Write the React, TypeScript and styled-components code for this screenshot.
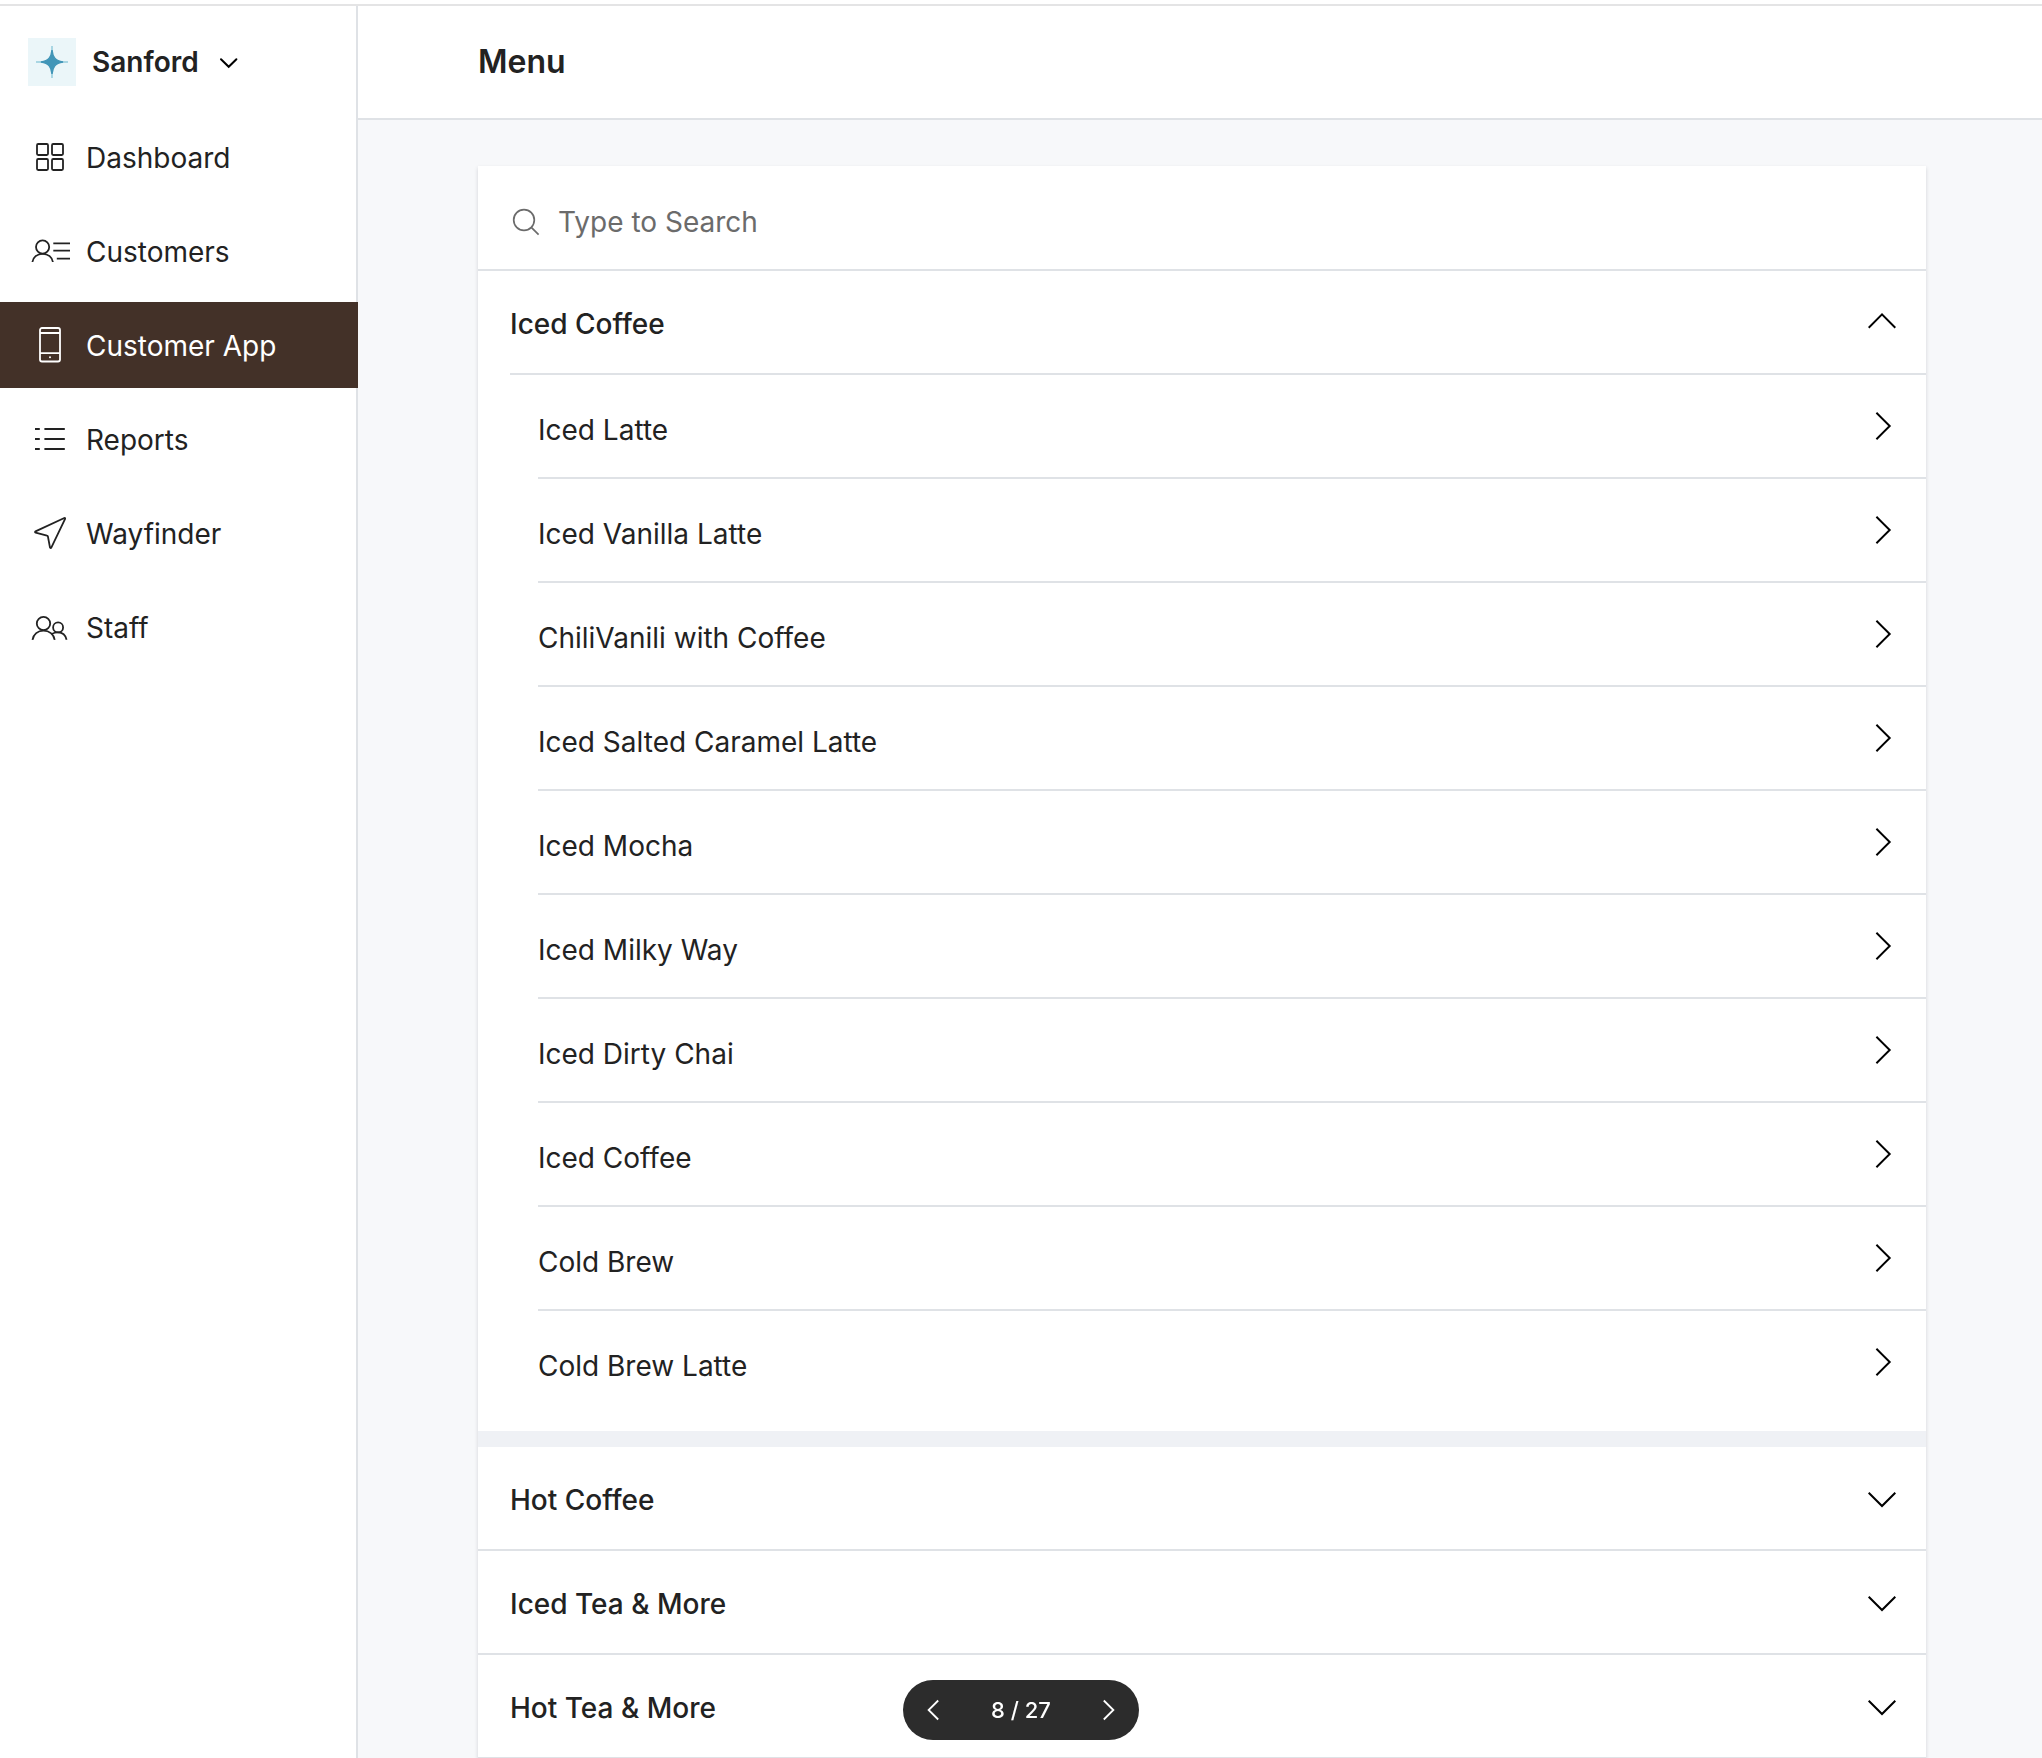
import React, { useState } from "react";
import styled, { createGlobalStyle, css } from "styled-components";

const color = {
  ink: "#222222",
  line: "#dfe2e6",
  canvas: "#f7f8fa",
  active: "#433128",
  muted: "#6b6b6b",
};

const GlobalStyle = createGlobalStyle`
  *, *::before, *::after { box-sizing: border-box; }
  body {
    margin: 0;
    background: #ffffff;
    color: ${color.ink};
    font-family: Inter, "Liberation Sans", sans-serif;
    font-size: 28px;
    line-height: 34px;
    font-weight: 400;
    font-variant-ligatures: none;
  }
  button, input { font: inherit; font-variant-ligatures: inherit; color: inherit; }
`;

const Shell = styled.div`
  display: flex;
  flex-direction: column;
  height: 100vh;
  padding-top: 4px;
`;

const Body = styled.div`
  display: flex;
  flex: 1;
  min-height: 0;
  border-top: 2px solid #e4e4e5;
`;

const Sidebar = styled.aside`
  flex: none;
  width: 358px;
  background: linear-gradient(${color.line}, ${color.line}) right / 2px 100% no-repeat;
`;

const Brand = styled.button`
  display: flex;
  align-items: center;
  gap: 16px;
  width: 100%;
  padding: 32px 28px 28px;
  border: 0;
  background: none;
  font-weight: 600;
  text-align: left;
`;

const BrandMark = styled.svg`
  width: 48px;
  height: 48px;
  background: #ebf6f9;
`;

const BrandChevron = styled.svg`
  width: 28px;
  height: 28px;
  fill: none;
  stroke: #000000;
  stroke-width: 2;
  stroke-linecap: round;
`;

const NavList = styled.ul`
  display: flex;
  flex-direction: column;
  gap: 8px;
  margin: 0;
  padding: 0;
  list-style: none;
`;

const NavLink = styled.a<{ $active?: boolean }>`
  display: flex;
  align-items: center;
  gap: 16px;
  height: 86px;
  padding: 0 30px;
  color: inherit;
  text-decoration: none;
  ${(p) =>
    p.$active &&
    css`
      background: ${color.active};
      color: #ffffff;
    `}
`;

const NavLabel = styled.span`
  padding-top: 2px;
`;

const NavGlyph = styled.svg`
  flex: none;
  width: 40px;
  height: 40px;
  fill: none;
  stroke: currentColor;
  stroke-width: 1.8;
  stroke-linejoin: round;
`;

const Main = styled.main`
  display: flex;
  flex: 1;
  flex-direction: column;
  min-width: 0;
`;

const Header = styled.header`
  display: flex;
  flex: none;
  align-items: center;
  height: 114px;
  padding: 0 120px;
  border-bottom: 2px solid ${color.line};
`;

const Title = styled.h1`
  margin: 0;
  font-size: 32px;
  line-height: 40px;
  font-weight: 600;
`;

const Content = styled.div`
  flex: 1;
  min-height: 0;
  padding: 46px 116px 46px 120px;
  overflow-y: auto;
  scrollbar-width: none;
  background: ${color.canvas};
`;

const Card = styled.section`
  background: #ffffff;
  box-shadow: 0 2px 4px rgba(20, 25, 35, 0.16);
`;

const Search = styled.label`
  display: flex;
  align-items: center;
  gap: 16px;
  height: 105px;
  padding: 8px 32px 0;
  border-bottom: 2px solid ${color.line};
  color: ${color.muted};
`;

const SearchGlyph = styled.svg`
  flex: none;
  width: 32px;
  height: 32px;
  fill: none;
  stroke: currentColor;
  stroke-width: 1.7;
`;

const SearchInput = styled.input`
  flex: 1;
  min-width: 0;
  padding: 0;
  border: 0;
  outline: 0;
  background: none;
  &::placeholder {
    color: ${color.muted};
    opacity: 1;
  }
`;

const Group = styled.div<{ $open: boolean }>`
  border-bottom: ${(p) => (p.$open ? "16px solid #eff1f5" : `2px solid ${color.line}`)};
`;

const GroupToggle = styled.button`
  display: flex;
  align-items: center;
  justify-content: space-between;
  width: 100%;
  height: 102px;
  padding: 0 30px 0 32px;
  border: 0;
  background: none;
  font-weight: 500;
  text-align: left;
`;

const GroupLabel = styled.span`
  padding-top: 4px;
`;

const Items = styled.ul`
  margin: 0 0 0 32px;
  padding: 0 0 18px 28px;
  border-top: 2px solid ${color.line};
  list-style: none;
`;

const Item = styled.li`
  & + & {
    border-top: 2px solid ${color.line};
  }
`;

const ItemLink = styled.a`
  display: flex;
  align-items: center;
  justify-content: space-between;
  height: 102px;
  padding-right: 30px;
  color: inherit;
  text-decoration: none;
`;

const ItemLabel = styled.span`
  padding-top: 8px;
`;

const RowChevron = styled.svg`
  flex: none;
  width: 28px;
  height: 28px;
  fill: none;
  stroke: #000000;
  stroke-width: 2;
`;

const Pager = styled.nav`
  position: fixed;
  bottom: 18px;
  left: 50%;
  display: flex;
  align-items: center;
  justify-content: space-between;
  width: 236px;
  height: 60px;
  border-radius: 30px;
  background: #2c2c2c;
  color: #ffffff;
  font-size: 22px;
  line-height: 28px;
  font-weight: 500;
  transform: translateX(-50%);
`;

const PagerButton = styled.button`
  display: flex;
  align-items: center;
  justify-content: center;
  width: 60px;
  height: 60px;
  padding: 0;
  border: 0;
  background: none;
`;

const PagerGlyph = styled.svg`
  width: 24px;
  height: 24px;
  fill: none;
  stroke: currentColor;
  stroke-width: 1.8;
`;

const navigation = [
  {
    label: "Dashboard",
    glyph: (
      <>
        <rect x="7" y="7" width="11" height="11" rx="1.2" />
        <rect x="22" y="7" width="11" height="11" rx="1.2" />
        <rect x="7" y="22" width="11" height="11" rx="1.2" />
        <rect x="22" y="22" width="11" height="11" rx="1.2" />
      </>
    ),
  },
  {
    label: "Customers",
    glyph: (
      <>
        <circle cx="12.6" cy="16" r="6.6" />
        <path d="M2.4 31C3 26.2 7 22.8 12.6 22.8S22.3 26.2 22.9 31" />
        <path d="M23.3 12.4H40M23.3 19.7H40M26.8 27.7H40" />
      </>
    ),
  },
  {
    label: "Customer App",
    active: true,
    glyph: (
      <>
        <rect x="10" y="3" width="20" height="33.5" rx="2" />
        <path d="M10 8H30M10 28.2H30" />
        <circle cx="20" cy="32.2" r="1" fill="currentColor" stroke="none" />
      </>
    ),
  },
  {
    label: "Reports",
    glyph: <path strokeWidth="2" d="M5 10H9.8M14.4 10H34.8M5 20H9.8M14.4 20H34.8M5 30H9.8M14.4 30H34.8" />,
  },
  {
    label: "Wayfinder",
    glyph: (
      <path d="M34.3 5 5.5 18.4C4.8 18.8 4.9 19.5 5.6 19.7L17 22.6C17.5 22.7 17.8 23 17.9 23.4L20 34.6C20.2 35.3 21 35.3 21.3 34.7L35.1 5.9C35.4 5.2 35 4.7 34.3 5Z" />
    ),
  },
  {
    label: "Staff",
    glyph: (
      <>
        <circle cx="13.5" cy="16.5" r="6.7" />
        <path d="M2.5 32.8C3.4 27.2 7.8 23.6 13.5 23.6S23.8 27.2 24.7 32.8" />
        <circle cx="28.1" cy="20.4" r="5" />
        <path d="M21.8 27C23.6 25.9 25.8 25.4 28 25.4C32.3 25.4 35.6 28.2 36.6 32.8" />
      </>
    ),
  },
];

const groups = [
  {
    name: "Iced Coffee",
    items: [
      "Iced Latte",
      "Iced Vanilla Latte",
      "ChiliVanili with Coffee",
      "Iced Salted Caramel Latte",
      "Iced Mocha",
      "Iced Milky Way",
      "Iced Dirty Chai",
      "Iced Coffee",
      "Cold Brew",
      "Cold Brew Latte",
    ],
  },
  { name: "Hot Coffee", items: [] },
  { name: "Iced Tea & More", items: [] },
  { name: "Hot Tea & More", items: [] },
];

const chevrons = {
  up: "M.7 19.7 14 6.4 27.3 19.7",
  down: "M.7 8.7 14 22 27.3 8.7",
  right: "M8.4.7 21.7 14 8.4 27.3",
};

function Chevron({ direction }: { direction: keyof typeof chevrons }) {
  return (
    <RowChevron viewBox="0 0 28 28" aria-hidden="true">
      <path d={chevrons[direction]} />
    </RowChevron>
  );
}

export default function App() {
  const [openGroup, setOpenGroup] = useState<string | null>("Iced Coffee");
  const [query, setQuery] = useState("");
  const [page, setPage] = useState(8);
  const pageCount = 27;

  return (
    <>
      <GlobalStyle />
      <Shell>
        <Body>
          <Sidebar>
            <Brand type="button" aria-haspopup="menu">
              <BrandMark viewBox="0 0 48 48" aria-hidden="true">
                <path fill="#a9d6e3" d="M23 8h2v32h-2zM8 23h32v2H8z" />
                <path
                  fill="#4296b8"
                  d="M24 12C24.8 19 27 22.7 35 24C27 25.3 24.8 29 24 36C23.2 29 21 25.3 13 24C21 22.7 23.2 19 24 12Z"
                  stroke="#4296b8"
                  strokeWidth="1.4"
                />
              </BrandMark>
              <span>Sanford</span>
              <BrandChevron viewBox="0 0 28 28" aria-hidden="true">
                <path d="M6 11.2 13.7 18.8 21.4 11.2" />
              </BrandChevron>
            </Brand>
            <nav aria-label="Main">
              <NavList>
                {navigation.map(({ label, glyph, active }) => (
                  <li key={label}>
                    <NavLink href="#" $active={active} aria-current={active ? "page" : undefined}>
                      <NavGlyph viewBox="0 0 40 40" aria-hidden="true">
                        {glyph}
                      </NavGlyph>
                      <NavLabel>{label}</NavLabel>
                    </NavLink>
                  </li>
                ))}
              </NavList>
            </nav>
          </Sidebar>
          <Main>
            <Header>
              <Title>Menu</Title>
            </Header>
            <Content>
              <Card>
                <Search>
                  <SearchGlyph viewBox="0 0 32 32" aria-hidden="true">
                    <circle cx="14" cy="14" r="10.3" />
                    <path d="M21.3 21.3 28.6 28.6" />
                  </SearchGlyph>
                  <SearchInput
                    type="text"
                    placeholder="Type to Search"
                    aria-label="Type to Search"
                    value={query}
                    onChange={(e) => setQuery(e.target.value)}
                  />
                </Search>
                {groups.map(({ name, items }) => {
                  const open = openGroup === name;
                  return (
                    <Group key={name} $open={open}>
                      <GroupToggle
                        type="button"
                        aria-expanded={open}
                        onClick={() => setOpenGroup(open ? null : name)}
                      >
                        <GroupLabel>{name}</GroupLabel>
                        <Chevron direction={open ? "up" : "down"} />
                      </GroupToggle>
                      {open && items.length > 0 && (
                        <Items>
                          {items
                            .filter((item) => item.toLowerCase().includes(query.toLowerCase()))
                            .map((item) => (
                              <Item key={item}>
                                <ItemLink href="#">
                                  <ItemLabel>{item}</ItemLabel>
                                  <Chevron direction="right" />
                                </ItemLink>
                              </Item>
                            ))}
                        </Items>
                      )}
                    </Group>
                  );
                })}
              </Card>
            </Content>
          </Main>
        </Body>
        <Pager aria-label="Pages">
          <PagerButton type="button" aria-label="Previous" onClick={() => setPage(Math.max(1, page - 1))}>
            <PagerGlyph viewBox="0 0 24 24">
              <path d="M17.2 2.5 7.6 12 17.2 21.5" />
            </PagerGlyph>
          </PagerButton>
          <span>
            {page} / {pageCount}
          </span>
          <PagerButton type="button" aria-label="Next" onClick={() => setPage(Math.min(pageCount, page + 1))}>
            <PagerGlyph viewBox="0 0 24 24">
              <path d="M6.8 2.5 16.4 12 6.8 21.5" />
            </PagerGlyph>
          </PagerButton>
        </Pager>
      </Shell>
    </>
  );
}
